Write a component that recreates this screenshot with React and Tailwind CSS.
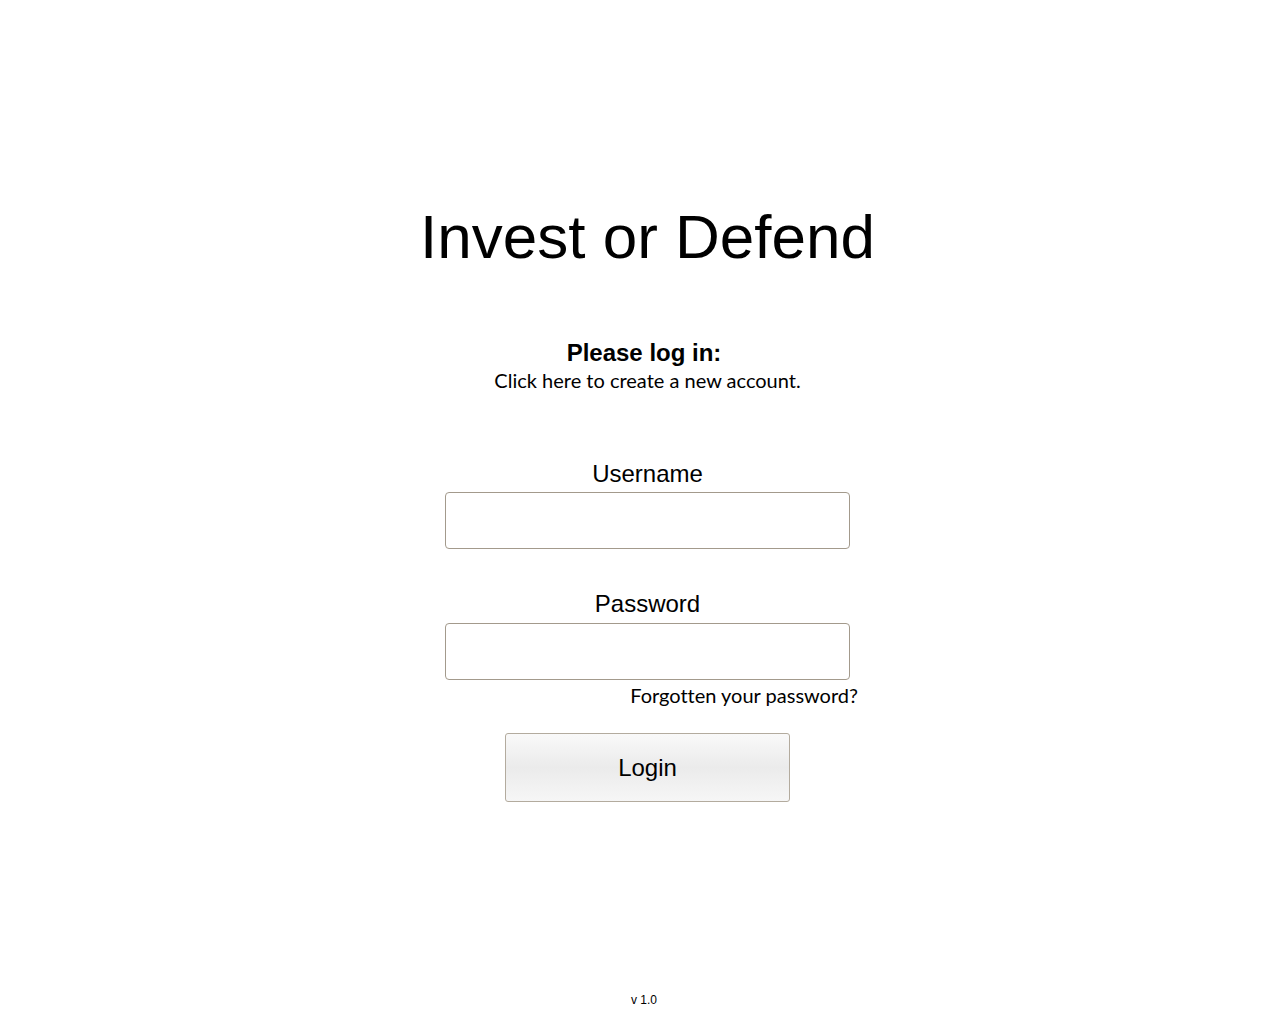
import React from 'react';

const sans = "font-['Liberation_Sans',Arial,sans-serif]";
const lato = "font-['Lato','Liberation_Sans',sans-serif] [font-variant-ligatures:none]";

// Login screen for Invest or Defend
export default function App() {
    return (
        <div className={`min-h-[1024px] flex flex-col bg-white text-black ${sans}`}>
            <main className="flex-1 flex flex-col items-center pl-[15px] pt-[201px]">
                <h1 className="text-[62px] leading-[72px] font-normal">Invest or Defend</h1>

                <div className="mt-[66px] flex flex-col items-center">
                    <p className="text-[24px] leading-[28px] font-bold pr-[7px]">Please log in:</p>
                    <a className={`${lato} text-[20px] leading-[24px] mt-[1px] cursor-pointer`}>
                        Click here to create a new account.
                    </a>
                </div>

                <form className="mt-[68px] flex flex-col items-center w-[405px]" onSubmit={(e) => e.preventDefault()}>
                    <label className="text-[24px] leading-[28px]">Username</label>
                    <input
                        type="text"
                        className="mt-[4px] w-[405px] h-[57px] border border-[#a39a8c] rounded-[4px] bg-white px-3 text-[20px] outline-none"
                    />

                    <label className="mt-[41px] text-[24px] leading-[28px]">Password</label>
                    <input
                        type="password"
                        className="mt-[5px] w-[405px] h-[57px] border border-[#a39a8c] rounded-[4px] bg-white px-3 text-[20px] outline-none"
                    />
                    <a className={`${lato} self-stretch -mr-[8px] text-right text-[20px] leading-[24px] mt-[3px] cursor-pointer`}>
                        Forgotten your password?
                    </a>

                    <button
                        type="submit"
                        className="mt-[26px] w-[285px] h-[69px] border border-[#b3ab9e] rounded-[3px] bg-gradient-to-b from-[#f9f9f9] via-[#ebebeb] to-[#f6f6f6] text-[24px] leading-[28px] pt-[1px]"
                    >
                        Login
                    </button>
                </form>
            </main>

            <footer className="flex justify-center pl-[8px] pb-[17px]">
                <span className="text-[12px] leading-[14px]">v 1.0</span>
            </footer>
        </div>
    );
}
